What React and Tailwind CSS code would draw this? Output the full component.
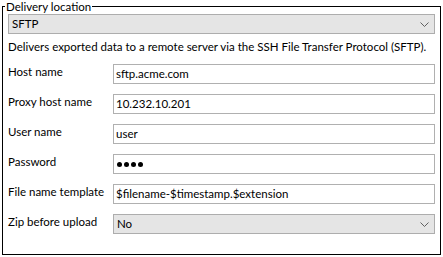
const FONT = "font-['Lato','Liberation_Sans',sans-serif]";

const FIELDS = [
    { label: 'Host name', value: 'sftp.acme.com' },
    { label: 'Proxy host name', value: '10.232.10.201' },
    { label: 'User name', value: 'user' },
    { label: 'Password', password: true },
    { label: 'File name template', value: '$filename-$timestamp.$extension' },
    { label: 'Zip before upload', value: 'No', select: true },
];

function Chevron() {
    return (
        <svg width="9" height="5" viewBox="0 0 9 5" className="shrink-0">
            <path d="M0.5 0.5 L4.5 4.5 L8.5 0.5" fill="none" stroke="#606060" strokeWidth="1" />
        </svg>
    );
}

function Combo({ value, className = '' }) {
    return (
        <div
            className={`flex h-[20px] items-center justify-between border border-[#adadad] bg-[#e5e5e5] pl-[3px] pr-[5px] ${className}`}
        >
            <span className="leading-[16px]">{value}</span>
            <Chevron />
        </div>
    );
}

function Field({ field }) {
    if (field.select) return <Combo value={field.value} className="w-[323px]" />;
    return (
        <div className="flex h-[20px] w-[323px] items-center border border-[#b0b0b0] bg-white px-[2px]">
            {field.password ? (
                <div className="flex gap-[2px] pl-px">
                    {[0, 1, 2, 3].map((i) => (
                        <span key={i} className="h-[5px] w-[5px] rounded-full bg-black" />
                    ))}
                </div>
            ) : (
                <span className="whitespace-nowrap leading-[16px]">{field.value}</span>
            )}
        </div>
    );
}

export default function App() {
    return (
        <div className={`h-[257px] w-[443px] bg-white text-[11.5px] text-black ${FONT}`}>
            <fieldset className="ml-[2px] h-[255px] w-[439px] min-w-0 border border-black px-[5px] pt-0">
                <legend className="ml-[-3px] px-px leading-[13px]">Delivery location</legend>
                <Combo value="SFTP" className="mt-[1px] w-full" />
                <p className="mt-[5px] whitespace-nowrap leading-[16px]">
                    Delivers exported data to a remote server via the SSH File Transfer Protocol (SFTP).
                </p>
                <div className="mt-[9px] flex flex-col gap-[10px]">
                    {FIELDS.map((f) => (
                        <div key={f.label} className="flex h-[20px] items-start">
                            <span className="w-[105px] shrink-0 whitespace-nowrap leading-[16px]">
                                {f.label}
                            </span>
                            <Field field={f} />
                        </div>
                    ))}
                </div>
            </fieldset>
        </div>
    );
}
